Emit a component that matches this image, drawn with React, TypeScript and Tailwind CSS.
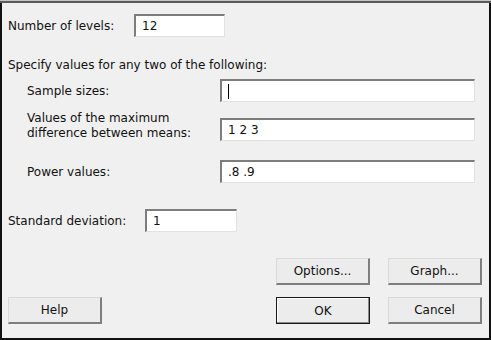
import React from "react";

function Field({ value, width, caret }: { value?: string; width: string; caret?: boolean }) {
  return (
    <div
      className={`${width} h-[23px] shrink-0 bg-white flex items-center pl-[6px] border-t-2 border-l-2 border-b border-r border-t-[#7d7d7d] border-l-[#7d7d7d] border-b-[#e2e2e2] border-r-[#e2e2e2]`}
    >
      {caret && <span className="block w-px h-[15px] bg-black" />}
      {value && <span className="leading-none">{value}</span>}
    </div>
  );
}

function Btn({ label, primary, className = "" }: { label: string; primary?: boolean; className?: string }) {
  return (
    <button
      className={`${className} w-[94px] h-[27px] shrink-0 flex items-center justify-center bg-[#ececec] ${
        primary
          ? "border border-[#1a1a1a] shadow-[inset_-1px_-1px_0_#8a8a8a,inset_1px_1px_0_#ffffff]"
          : "border-t border-l border-t-[#dadada] border-l-[#dadada] border-b-2 border-r-2 border-b-[#7e7e7e] border-r-[#7e7e7e]"
      }`}
    >
      {label}
    </button>
  );
}

export default function App() {
  return (
    <div className="w-[491px] h-[340px] bg-[#f0f0f0] flex flex-col font-['DejaVu_Sans',Verdana,sans-serif] text-[12px] text-[#111]">
      <div className="h-px bg-[#c4c4c4]" />
      <div className="h-[2px] bg-[#5a5a5a]" />
      <div className="flex-1 flex flex-col border-x-2 border-b-2 border-[#111] pl-[6px] pt-[11px]">
        {/* Number of levels */}
        <div className="flex items-center h-[23px]">
          <span className="w-[126px]">Number of levels:</span>
          <Field value="12" width="w-[91px]" />
        </div>

        <div className="mt-[20px] h-[16px] leading-[16px]">Specify values for any two of the following:</div>

        <div className="mt-[6px] flex items-center h-[23px]">
          <span className="w-[212px] pl-[19px]">Sample sizes:</span>
          <Field caret width="w-[255px]" />
        </div>

        <div className="mt-[9px] flex items-start h-[30px]">
          <span className="w-[212px] pl-[19px] leading-[15px]">
            Values of the maximum
            <br />
            difference between means:
          </span>
          <div className="mt-[7px]">
            <Field value="1 2 3" width="w-[255px]" />
          </div>
        </div>

        <div className="mt-[19px] flex items-center h-[23px]">
          <span className="w-[212px] pl-[19px]">Power values:</span>
          <Field value=".8 .9" width="w-[255px]" />
        </div>

        <div className="mt-[26px] flex items-center h-[23px]">
          <span className="w-[137px]">Standard deviation:</span>
          <Field value="1" width="w-[92px]" />
        </div>

        <div className="mt-[26px] flex">
          <Btn label="Options..." className="ml-[268px]" />
          <Btn label="Graph..." className="ml-[18px]" />
        </div>

        <div className="mt-[12px] flex">
          <Btn label="Help" />
          <Btn label="OK" primary className="ml-[174px]" />
          <Btn label="Cancel" className="ml-[18px]" />
        </div>
      </div>
    </div>
  );
}
